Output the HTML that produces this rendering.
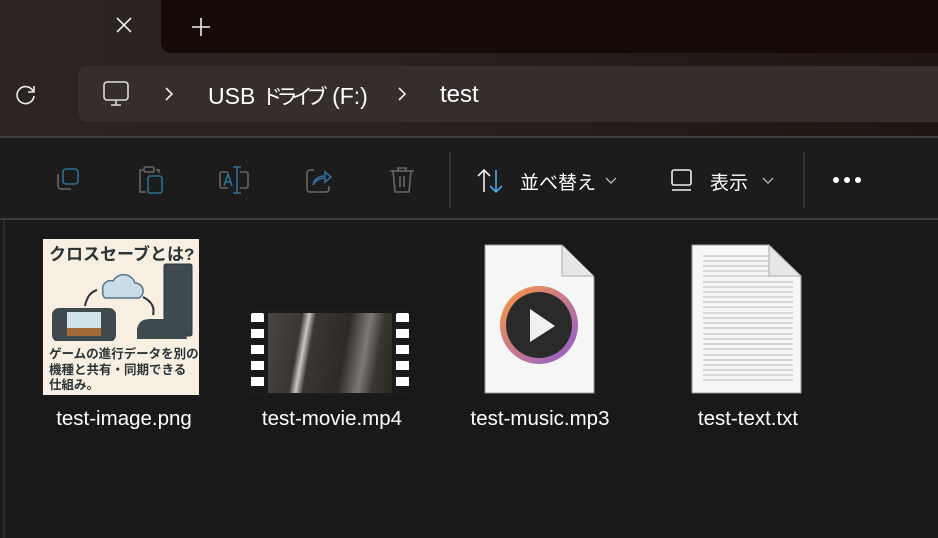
<!DOCTYPE html>
<html><head><meta charset="utf-8"><style>
*{margin:0;padding:0;box-sizing:border-box}
body{width:938px;height:538px;overflow:hidden;background:#191919;font-family:"Liberation Sans","Noto Sans CJK JP",sans-serif;color:#fff;position:relative}
.a{position:absolute}
.lbl{position:absolute;top:407px;font-size:20.5px;color:#fff;text-align:center;width:220px}
</style></head><body>
<div class="a" style="left:0;top:0;width:938px;height:137px;background:linear-gradient(90deg,#2c2423,#2a221f 40%,#1f1612)"></div>
<div class="a" style="left:161px;top:0;width:777px;height:53px;background:#150a05;border-bottom-left-radius:10px"></div>
<svg class="a" style="left:115px;top:16px" width="18" height="18"><path d="M2 2l14 14M16 2L2 16" stroke="#eee" stroke-width="1.6"/></svg>
<svg class="a" style="left:190px;top:16px" width="22" height="22"><path d="M11 2v18M2 11h18" stroke="#eee" stroke-width="1.6"/></svg>
<svg class="a" style="left:14px;top:83px" width="24" height="24" fill="none" stroke="#eee" stroke-width="1.6"><path d="M19 8A8.5 8.5 0 1 0 20 13"/><path d="M20 3v6h-6"/></svg>
<div class="a" style="left:78px;top:66px;width:860px;height:56px;background:#362e2c;border-radius:8px 0 0 8px"></div>
<svg class="a" style="left:102px;top:80px" width="28" height="28" fill="none" stroke="#ddd" stroke-width="1.6"><rect x="2" y="2" width="24" height="18" rx="3"/><path d="M9 25h10M14 20v5"/></svg>
<svg class="a" style="left:163px;top:85px" width="12" height="18" fill="none" stroke="#eee" stroke-width="1.6"><path d="M3 3l6 6-6 6"/></svg>
<div class="a" style="left:208px;top:81px;font-size:23px;white-space:nowrap">USB <span style="font-size:21px;letter-spacing:-6px;margin-right:4px">ドライブ</span> (F:)</div>
<svg class="a" style="left:396px;top:85px" width="12" height="18" fill="none" stroke="#eee" stroke-width="1.6"><path d="M3 3l6 6-6 6"/></svg>
<div class="a" style="left:440px;top:81px;font-size:24px">test</div>
<div class="a" style="left:0;top:136px;width:938px;height:2px;background:#3e3e3e"></div>
<div class="a" style="left:0;top:138px;width:938px;height:80px;background:#1c1c1c"></div>
<div class="a" style="left:0;top:218px;width:938px;height:2px;background:#3a3a3a"></div>
<svg class="a" style="left:52px;top:166px" width="30" height="30" fill="none" stroke-width="1.6"><path d="M6 8v12a3 3 0 0 0 3 3h10" stroke="#666"/><rect x="11" y="3" width="15" height="15" rx="3" stroke="#2f6f95"/></svg>
<svg class="a" style="left:136px;top:164px" width="30" height="32" fill="none" stroke-width="1.6"><path d="M7 6H4v22h6M20 6h3v3" stroke="#666"/><rect x="8" y="3" width="10" height="5" rx="1.5" stroke="#666"/><rect x="12" y="12" width="14" height="17" rx="2.5" stroke="#2f6f95"/></svg>
<svg class="a" style="left:218px;top:164px" width="32" height="32" fill="none" stroke-width="1.6"><path d="M10 8H4a2 2 0 0 0-2 2v12a2 2 0 0 0 2 2h6M22 8h6a2 2 0 0 1 2 2v12a2 2 0 0 1-2 2h-6" stroke="#666"/><path d="M19 3v26M15 3h8M15 29h8" stroke="#2f6f95"/><path d="M6 22l4-12 4 12M7.5 18h5" stroke="#2f6f95"/></svg>
<svg class="a" style="left:304px;top:166px" width="30" height="30" fill="none" stroke-width="1.6"><path d="M10 4H6a3 3 0 0 0-3 3v16a3 3 0 0 0 3 3h16a3 3 0 0 0 3-3v-3" stroke="#666"/><path d="M9 19c1-6 6-9 12-9V6l6 5-6 5v-4c-5 0-9 2-12 7z" stroke="#2f6f95"/></svg>
<svg class="a" style="left:388px;top:165px" width="28" height="30" fill="none" stroke="#666" stroke-width="1.6"><path d="M2 6h24M10 6V3h8v3M5 6l2 21h14l2-21M12 11v11M16 11v11"/></svg>
<div class="a" style="left:449px;top:152px;width:2px;height:56px;background:#333"></div>
<svg class="a" style="left:476px;top:168px" width="30" height="26" fill="none" stroke-width="1.6"><path d="M8 24V2M2 8l6-6 6 6" stroke="#eee"/><path d="M20 2v22M14 18l6 6 6-6" stroke="#4aa8e8"/></svg>
<div class="a" style="left:520px;top:168px;font-size:19px">並べ替え</div>
<svg class="a" style="left:605px;top:177px" width="12" height="8" fill="none" stroke="#ccc" stroke-width="1.2"><path d="M1 1l5 5 5-5"/></svg>
<svg class="a" style="left:670px;top:168px" width="24" height="24" fill="none" stroke="#eee" stroke-width="1.6"><rect x="2" y="2" width="19" height="15" rx="2"/><path d="M2 22h19"/></svg>
<div class="a" style="left:710px;top:168px;font-size:19px">表示</div>
<svg class="a" style="left:762px;top:177px" width="12" height="8" fill="none" stroke="#ccc" stroke-width="1.2"><path d="M1 1l5 5 5-5"/></svg>
<div class="a" style="left:803px;top:152px;width:2px;height:56px;background:#333"></div>
<svg class="a" style="left:832px;top:176px" width="32" height="8"><circle cx="4" cy="4" r="3" fill="#fff"/><circle cx="15" cy="4" r="3" fill="#fff"/><circle cx="26" cy="4" r="3" fill="#fff"/></svg>
<div class="a" style="left:3px;top:220px;width:2px;height:318px;background:#2a2a2a"></div>
<div class="a" style="left:43px;top:239px;width:156px;height:156px;background:#f7f0e2;overflow:hidden">
<div class="a" style="left:6px;top:1px;font-size:17px;font-weight:bold;color:#2b3336;white-space:nowrap">クロスセーブとは?</div>
<svg class="a" style="left:0;top:22px" width="156" height="80">
<path d="M60 30a8 8 0 0 1 10-10a12 12 0 0 1 22 2a8 8 0 0 1 4 15H62a7 7 0 0 1-2-7z" fill="#c7dde8" stroke="#5a7585" stroke-width="1.5"/>
<path d="M42 45c2-10 6-14 12-16" stroke="#2b3336" stroke-width="2" fill="none"/>
<path d="M100 36c8 4 12 10 10 18" stroke="#2b3336" stroke-width="2" fill="none"/>
<rect x="121" y="3" width="28" height="72" rx="2" fill="#3f4a4f" stroke="#2b3336"/>
<rect x="9" y="47" width="64" height="34" rx="7" fill="#3f4a4f"/>
<rect x="24" y="51" width="34" height="24" fill="#cfe3ea"/><rect x="24" y="67" width="34" height="8" fill="#a46b3a"/>
<path d="M94 68c2-8 6-10 14-10h20c8 0 12 2 14 10l2 10h-50z" fill="#3f4a4f"/>
</svg>
<div class="a" style="left:6px;top:108px;font-size:12.5px;font-weight:bold;color:#2b3336;line-height:15.5px;white-space:nowrap">ゲームの進行データを別の<br>機種と共有・同期できる<br>仕組み。</div>
</div>
<div class="a" style="left:248px;top:309px;width:162px;height:87px;background:#1b1b1b;border-radius:3px"></div>
<div class="a" style="left:268px;top:313px;width:124px;height:80px;background:linear-gradient(100deg,#4a4642 0%,#3a3530 25%,#c8c8c8 30%,#3b3631 35%,#2e2a26 60%,#7c7a76 75%,#3a3631 85%,#2a2623 100%)"></div>
<div class="a" style="left:251px;top:313px;width:13px;height:80px;background:repeating-linear-gradient(#fff 0 9px,transparent 9px 16px);border-radius:2px"></div>
<div class="a" style="left:396px;top:313px;width:13px;height:80px;background:repeating-linear-gradient(#fff 0 9px,transparent 9px 16px);border-radius:2px"></div>
<svg class="a" style="left:484px;top:244px" width="112" height="150">
<path d="M1 1h77l32 32v116H1z" fill="#f6f6f7" stroke="#999"/><path d="M78 1v31h32" fill="#e6e6e6" stroke="#aaa"/>
<defs><linearGradient id="g" x1="0" y1="0" x2="1" y2="1"><stop offset="0" stop-color="#ff9a3c"/><stop offset="1" stop-color="#8a5bd8"/></linearGradient></defs>
<circle cx="55" cy="81" r="39" fill="url(#g)"/><circle cx="55" cy="81" r="33" fill="#2a2a2a"/>
<path d="M46 65v33l25-16z" fill="#f0f0f0"/>
</svg>
<svg class="a" style="left:691px;top:244px" width="112" height="150">
<path d="M1 1h77l32 32v116H1z" fill="#f6f6f7" stroke="#999"/>
<g stroke="#bbb">
<path d="M12 12h66M12 17h66M12 22h66M12 27h66M12 32h98M12 38h90M12 43h90M12 48h90M12 53h90M12 58h90M12 63h90M12 69h90M12 74h90M12 79h90M12 84h90M12 90h90M12 95h90M12 100h90M12 105h90M12 111h90M12 116h90M12 121h90M12 126h90M12 131h90M12 136h90"/></g>
<path d="M78 1v31h32z" fill="#e6e6e6" stroke="#aaa"/>
</svg>
<div class="lbl" style="left:14px">test-image.png</div>
<div class="lbl" style="left:222px">test-movie.mp4</div>
<div class="lbl" style="left:430px">test-music.mp3</div>
<div class="lbl" style="left:638px">test-text.txt</div>
</body></html>
